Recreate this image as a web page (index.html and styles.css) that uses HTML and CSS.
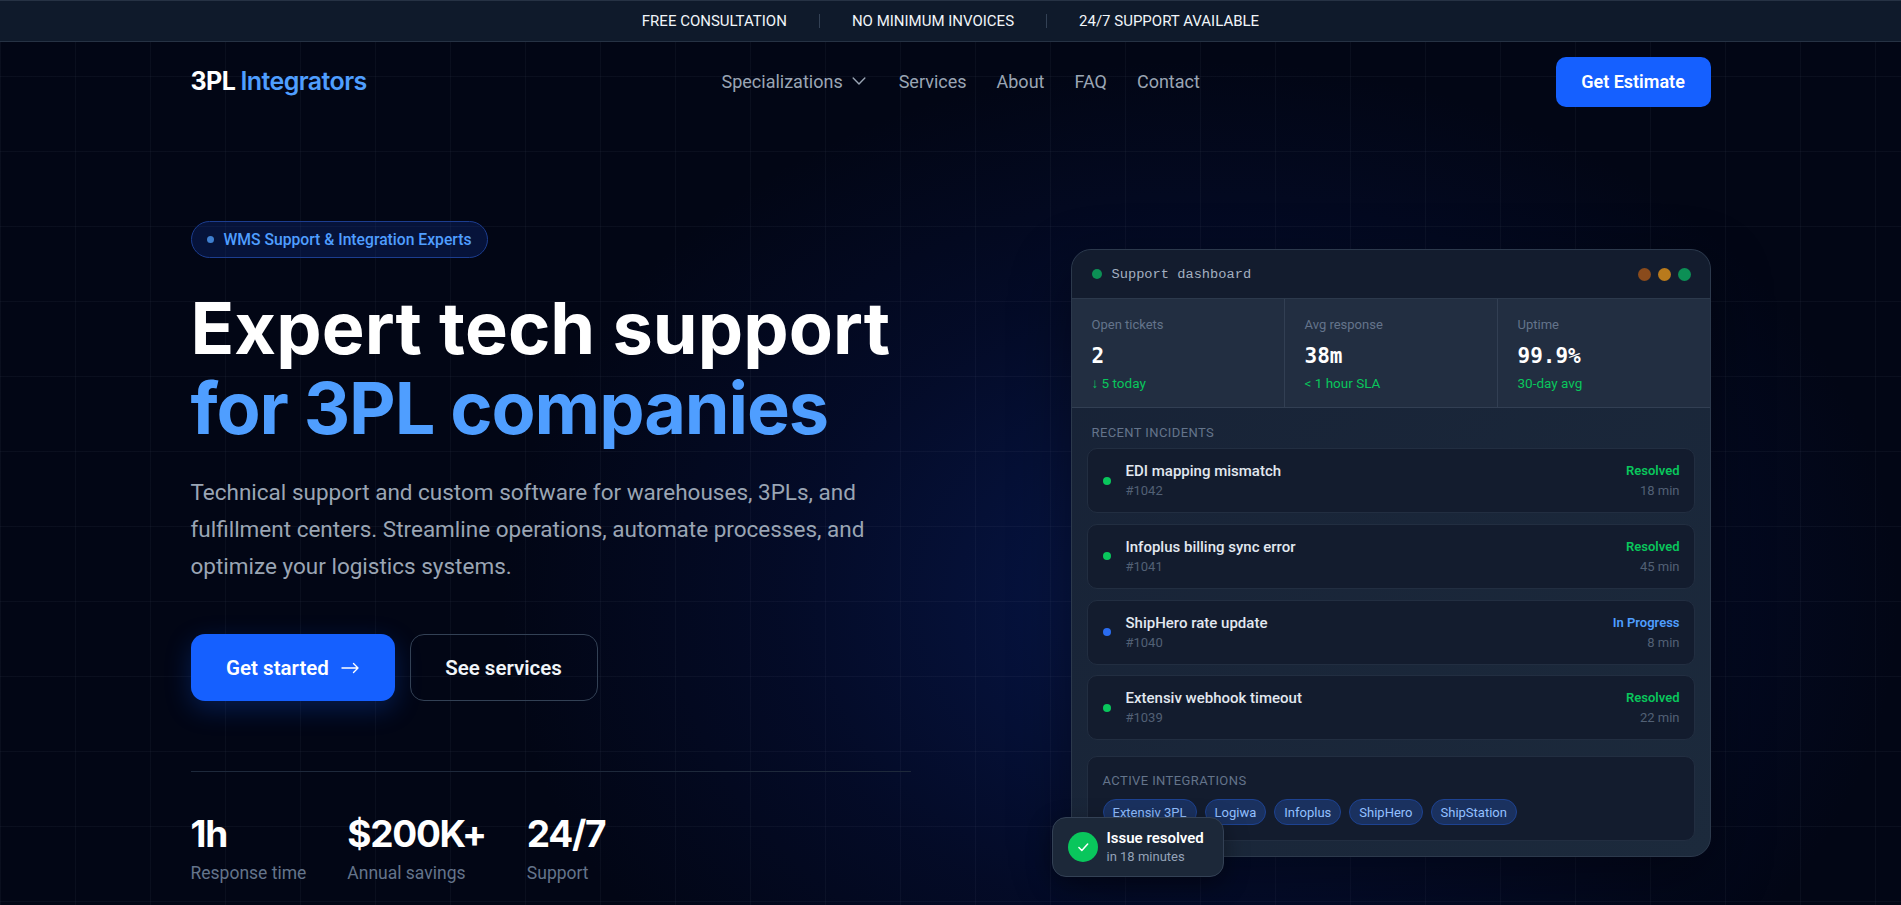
FILE: index.html
```html
<!DOCTYPE html>
<html lang="en">
<head>
    <meta charset="UTF-8">
    <meta name="viewport" content="width=device-width, initial-scale=1.0">
    <title>3PL Integrators</title>
    <link rel="stylesheet" href="styles.css">
</head>
<body>
    <!-- Top strip -->
    <div class="topbar">
        <span>FREE CONSULTATION</span>
        <i class="topbar-sep"></i>
        <span>NO MINIMUM INVOICES</span>
        <i class="topbar-sep"></i>
        <span>24/7 SUPPORT AVAILABLE</span>
    </div>

    <header class="container site-header">
        <a class="logo" href="#">3PL <span>Integrators</span></a>
        <nav class="main-nav">
            <a href="#">Specializations
                <svg width="20" height="20" viewBox="0 0 24 24" fill="none" stroke="currentColor" stroke-width="1.700" stroke-linecap="round" stroke-linejoin="round"><path d="M5 8.500l7 7 7-7"/></svg>
            </a>
            <a href="#">Services</a>
            <a href="#">About</a>
            <a href="#">FAQ</a>
            <a href="#">Contact</a>
        </nav>
        <a class="btn-estimate" href="#">Get Estimate</a>
    </header>

    <main class="container hero">
        <section class="hero-left">
            <div class="badge"><i class="badge-dot"></i>WMS Support &amp; Integration Experts</div>
            <h1>Expert tech support<br><span>for 3PL companies</span></h1>
            <p class="lead">Technical support and custom software for warehouses, 3PLs, and fulfillment centers. Streamline operations, automate processes, and optimize your logistics systems.</p>
            <div class="hero-actions">
                <a class="btn-primary" href="#">Get started
                    <svg width="18" height="12" viewBox="0 0 18 12" fill="none" stroke="currentColor" stroke-width="1.400" stroke-linecap="round" stroke-linejoin="round"><path d="M1 6h16M12.500 1.500L17 6l-4.500 4.500"/></svg>
                </a>
                <a class="btn-outline" href="#">See services</a>
            </div>
            <div class="stats">
                <div><strong>1h</strong><small>Response time</small></div>
                <div><strong>$200K+</strong><small>Annual savings</small></div>
                <div><strong>24/7</strong><small>Support</small></div>
            </div>
        </section>

        <section class="panel">
            <div class="panel-head">
                <i class="dot-status"></i>
                <span class="panel-title">Support dashboard</span>
                <div class="window-dots"><i class="wd-red"></i><i class="wd-amber"></i><i class="wd-green"></i></div>
            </div>
            <div class="metrics">
                <div class="metric"><label>Open tickets</label><b>2</b><em>↓ 5 today</em></div>
                <div class="metric"><label>Avg response</label><b>38m</b><em>&lt; 1 hour SLA</em></div>
                <div class="metric"><label>Uptime</label><b>99.9%</b><em>30-day avg</em></div>
            </div>
            <div class="panel-body">
                <h4>RECENT INCIDENTS</h4>
                <div class="incidents">
                    <div class="incident">
                        <i class="inc-dot"></i>
                        <div class="inc-main"><span>EDI mapping mismatch</span><small>#1042</small></div>
                        <div class="inc-side"><b>Resolved</b><small>18 min</small></div>
                    </div>
                    <div class="incident">
                        <i class="inc-dot"></i>
                        <div class="inc-main"><span>Infoplus billing sync error</span><small>#1041</small></div>
                        <div class="inc-side"><b>Resolved</b><small>45 min</small></div>
                    </div>
                    <div class="incident">
                        <i class="inc-dot blue"></i>
                        <div class="inc-main"><span>ShipHero rate update</span><small>#1040</small></div>
                        <div class="inc-side"><b class="blue">In Progress</b><small>8 min</small></div>
                    </div>
                    <div class="incident">
                        <i class="inc-dot"></i>
                        <div class="inc-main"><span>Extensiv webhook timeout</span><small>#1039</small></div>
                        <div class="inc-side"><b>Resolved</b><small>22 min</small></div>
                    </div>
                </div>
                <div class="integrations">
                    <h4>ACTIVE INTEGRATIONS</h4>
                    <div class="chips">
                        <span>Extensiv 3PL</span>
                        <span>Logiwa</span>
                        <span>Infoplus</span>
                        <span>ShipHero</span>
                        <span>ShipStation</span>
                    </div>
                </div>
            </div>
            <div class="toast">
                <div class="toast-icon">
                    <svg width="14" height="14" viewBox="0 0 24 24" fill="none" stroke="#fff" stroke-width="2.600" stroke-linecap="round" stroke-linejoin="round"><path d="M5 13l5 5L20 7"/></svg>
                </div>
                <div class="toast-text"><b>Issue resolved</b><small>in 18 minutes</small></div>
            </div>
        </section>
    </main>
</body>
</html>
```

FILE: styles.css
```css
* {
    box-sizing: border-box;
    margin: 0;
    padding: 0;
}

html, body {
    height: 905px;
    overflow: hidden;
}

body {
    font-family: Roboto, "Open Sans", sans-serif;
    color: #fff;
    background-color: #020615;
    background-image:
        linear-gradient(rgba(148, 163, 184, 0.055) 1px, transparent 1px),
        linear-gradient(90deg, rgba(148, 163, 184, 0.055) 1px, transparent 1px),
        radial-gradient(ellipse 700px 540px at 1200px 600px, rgba(16, 54, 170, 0.36), rgba(10, 30, 110, 0.2) 60%, transparent 100%);
    background-size: 75px 75px, 75px 75px, 100% 100%;
    background-position: 0 1px, 0 0, 0 0;
}

a {
    color: inherit;
    text-decoration: none;
}

i {
    display: block;
}

.container {
    width: 1520px;
    margin: 0 auto;
}

/* Top strip */
.topbar {
    height: 42px;
    display: flex;
    align-items: center;
    justify-content: center;
    gap: 32px;
    background: #0f1a2b;
    border-top: 1px solid #263244;
    border-bottom: 1px solid #263244;
    font-size: 15px;
    color: #f1f5f9;
}

.topbar-sep {
    width: 1px;
    height: 14px;
    background: #334155;
}

/* Header */
.site-header {
    height: 80px;
    display: flex;
    align-items: center;
    position: relative;
}

.logo {
    width: 174px;
    padding-bottom: 2px;
    font-family: Inter, sans-serif;
    font-size: 25px;
    font-weight: 700;
    letter-spacing: -0.6px;
    white-space: nowrap;
    color: #fff;
}

.logo span {
    color: #4f9eff;
    font-weight: 600;
}

.main-nav {
    display: flex;
    align-items: center;
    gap: 30px;
    margin-left: 357px;
    padding-bottom: 2px;
    font-size: 18px;
    color: #9aa5b4;
}

.main-nav a {
    display: flex;
    align-items: center;
    gap: 6px;
}

.btn-estimate {
    margin-left: auto;
    width: 155px;
    height: 50px;
    padding-bottom: 2px;
    display: flex;
    align-items: center;
    justify-content: center;
    background: #1560ff;
    border-radius: 10px;
    font-size: 18px;
    font-weight: 600;
}

/* Hero */
.hero {
    display: flex;
    justify-content: space-between;
    align-items: flex-start;
    padding-top: 99px;
}

.hero-left {
    width: 720px;
}

.badge {
    display: inline-flex;
    align-items: center;
    gap: 10px;
    height: 37px;
    width: 297px;
    padding-left: 15px;
    border: 1px solid #1c3d8f;
    border-radius: 19px;
    background: rgba(21, 70, 190, 0.22);
    color: #4f9eff;
    font-size: 15.700px;
    font-weight: 500;
    white-space: nowrap;
}

.badge-dot {
    width: 7px;
    height: 7px;
    border-radius: 50%;
    background: #3f7fcf;
}

h1 {
    margin-top: 30px;
    font-family: Inter, sans-serif;
    font-size: 72px;
    font-weight: 700;
    line-height: 80px;
    letter-spacing: 0.1px;
    color: #fff;
}

h1 span {
    color: #4f9eff;
    letter-spacing: -1.100px;
}

.lead {
    margin-top: 26px;
    width: 700px;
    font-size: 22.500px;
    line-height: 37px;
    color: #9aa5b4;
}

.hero-actions {
    display: flex;
    gap: 15px;
    margin-top: 49px;
}

.btn-primary, .btn-outline {
    height: 67px;
    display: flex;
    align-items: center;
    justify-content: center;
    border-radius: 14px;
    font-size: 20.500px;
    font-weight: 600;
}

.btn-primary {
    width: 204px;
    gap: 12px;
    background: #1560ff;
    box-shadow: 0 8px 26px rgba(21, 96, 255, 0.25);
}

.btn-outline {
    width: 188px;
    border: 1px solid #334155;
    color: #f1f5f9;
}

.stats {
    display: flex;
    gap: 41px;
    margin-top: 70px;
    padding-top: 39px;
    border-top: 1px solid #1e293b;
}

.stats strong {
    display: block;
    font-family: Inter, sans-serif;
    font-size: 37px;
    font-weight: 700;
    line-height: 46px;
    letter-spacing: -1.300px;
}

.stats small {
    display: block;
    margin-top: 3px;
    font-size: 17.500px;
    line-height: 26px;
    color: #64748b;
}

/* Dashboard panel */
.panel {
    position: relative;
    width: 640px;
    height: 608px;
    margin-top: 28px;
    border: 1px solid #2c394c;
    border-radius: 20px;
    background: linear-gradient(135deg, #172236, #1c2a3c);
    box-shadow: 0 20px 60px rgba(0, 0, 0, 0.4);
}

.panel-head {
    height: 49px;
    display: flex;
    align-items: center;
    padding: 0 19px 0 20px;
    border-bottom: 1px solid #2c394c;
    border-radius: 20px 20px 0 0;
    background: #131c2e;
}

.dot-status {
    width: 10px;
    height: 10px;
    border-radius: 50%;
    background: #0c8f55;
}

.panel-title {
    margin-left: 10px;
    font-family: "Liberation Mono", monospace;
    font-size: 13.700px;
    color: #a3afc0;
}

.window-dots {
    margin-left: auto;
    display: flex;
    gap: 7px;
}

.window-dots i {
    width: 13px;
    height: 13px;
    border-radius: 50%;
}

.wd-red { background: #8a4b1c; }
.wd-amber { background: #b97a1c; }
.wd-green { background: #0c8f55; }

.metrics {
    display: grid;
    grid-template-columns: 213px 213px 1fr;
    height: 109px;
    background: #222e41;
    border-bottom: 1px solid #323f53;
}

.metric {
    padding: 17px 0 0 20px;
    border-right: 1px solid #323f53;
}

.metric:last-child {
    border-right: none;
}

.metric label {
    display: block;
    font-size: 13px;
    line-height: 18px;
    color: #64748b;
}

.metric b {
    display: block;
    margin-top: 8px;
    font-family: "DejaVu Sans Mono", monospace;
    font-size: 21px;
    font-weight: 700;
    line-height: 28px;
}

.metric em {
    display: block;
    margin-top: 4px;
    font-style: normal;
    font-size: 13.500px;
    line-height: 18px;
    color: #09c65c;
}

.panel-body {
    padding: 17px 15px 0;
}

.panel-body h4 {
    font-size: 13px;
    font-weight: 400;
    line-height: 16px;
    letter-spacing: 0.4px;
    color: #64748b;
    margin-left: 5px;
}

.incidents {
    display: flex;
    flex-direction: column;
    gap: 10.800px;
    margin-top: 7px;
}

.incident {
    height: 65px;
    display: flex;
    align-items: center;
    padding: 0 14px 0 15px;
    background: #131c2e;
    border: 1px solid #222e41;
    border-radius: 10px;
}

.inc-dot {
    width: 8px;
    height: 8px;
    border-radius: 50%;
    background: #09c65c;
}

.inc-dot.blue {
    background: #2a6cf0;
}

.inc-main {
    margin-left: 15px;
}

.inc-main span {
    display: block;
    font-size: 15px;
    line-height: 20px;
    font-weight: 500;
    color: #e2e8f0;
}

.inc-main small, .inc-side small {
    display: block;
    margin-top: 1px;
    font-size: 13px;
    line-height: 18px;
    color: #526075;
}

.inc-side {
    margin-left: auto;
    text-align: right;
}

.inc-side b {
    display: block;
    font-size: 13px;
    line-height: 20px;
    font-weight: 600;
    color: #09c65c;
}

.inc-side b.blue {
    color: #4f9eff;
}

.integrations {
    height: 85px;
    margin-top: 16px;
    padding: 16px 15px 0 10px;
    background: #131c2e;
    border: 1px solid #222e41;
    border-radius: 10px;
}

.chips {
    display: flex;
    gap: 8px;
    margin-top: 10px;
    padding-left: 5px;
}

.chips span {
    height: 26px;
    display: flex;
    align-items: center;
    padding: 0 9px;
    border: 1px solid #1d4291;
    border-radius: 13px;
    background: #1a315f;
    font-size: 13px;
    color: #93c0ff;
}

.toast {
    position: absolute;
    left: -20px;
    top: 567px;
    width: 172px;
    height: 60px;
    display: flex;
    align-items: center;
    padding-left: 15px;
    background: #1c2839;
    border: 1px solid #334155;
    border-radius: 14px;
    box-shadow: 0 8px 24px rgba(0, 0, 0, 0.4);
}

.toast-icon {
    width: 30px;
    height: 30px;
    flex-shrink: 0;
    display: flex;
    align-items: center;
    justify-content: center;
    border-radius: 50%;
    background: #09c65c;
}

.toast-text {
    margin-left: 9px;
}

.toast-text b {
    display: block;
    font-size: 15px;
    line-height: 19px;
    font-weight: 600;
}

.toast-text small {
    display: block;
    font-size: 13px;
    line-height: 18px;
    color: #94a3b8;
}
```
